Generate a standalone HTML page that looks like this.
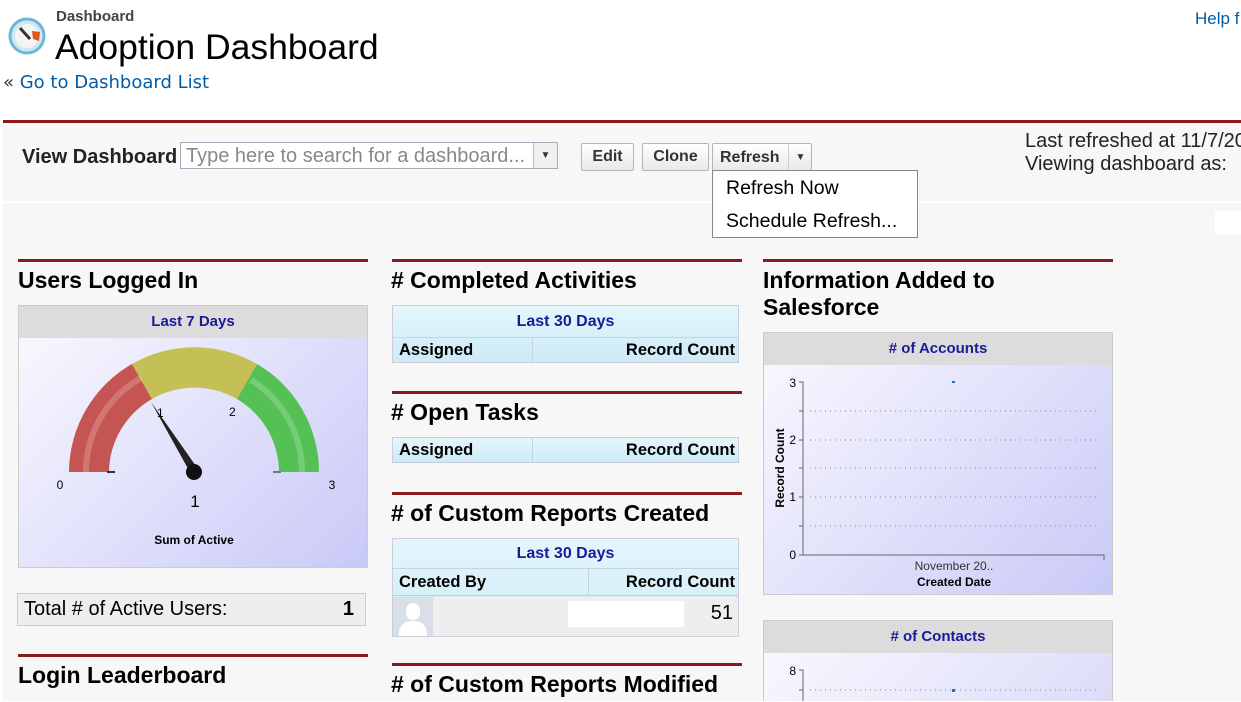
<!DOCTYPE html>
<html><head><meta charset="utf-8"><style>
*{margin:0;padding:0;box-sizing:border-box}
body{width:1241px;height:701px;overflow:hidden;background:#fff;font-family:"Liberation Sans",Arial,sans-serif;position:relative;color:#000}
.a{position:absolute;white-space:nowrap}
.red{position:absolute;height:3px;background:#8b1a1a}
.t{position:absolute;font-weight:bold;font-size:23px;white-space:nowrap}
.tbl{position:absolute;border:1px solid #ccd;background:linear-gradient(#e4f6fc,#cdebf6)}
.tbl .h{text-align:center;color:#1a1a9a;font-weight:bold;font-size:16px;border-bottom:1px solid #c5d5dd}
.tbl .r{display:flex;font-weight:bold;font-size:16.5px}
.btn{position:absolute;border:1px solid #b5b5b5;background:linear-gradient(#fff,#e9e9e9);font-weight:bold;font-size:16px;color:#333;text-align:center;border-radius:2px}
</style></head><body>
<svg class="a" style="left:8px;top:17px" width="40" height="38" viewBox="0 0 40 38"><circle cx="19" cy="19" r="17" fill="#cfe8f2" stroke="#6fb7d6" stroke-width="3"/><circle cx="19" cy="19" r="12" fill="#f4f4f4"/><line x1="12" y1="11" x2="22" y2="22" stroke="#333" stroke-width="3"/><path d="M24 14 L32 15 L31 24 L25 22Z" fill="#e2561d"/></svg>
<div class="a" style="left:56px;top:8px;font-size:15px;font-weight:bold;color:#444">Dashboard</div>
<div class="a" style="left:55px;top:27px;font-size:35.5px">Adoption Dashboard</div>
<div class="a" style="left:3px;top:72px;color:#015ba7;font-family:'DejaVu Sans',sans-serif;font-size:18px"><span style="color:#333">«</span> Go to Dashboard List</div>
<div class="a" style="left:1195px;top:9px;font-size:17px;color:#015ba7">Help f</div>
<div style="position:absolute;left:3px;top:123px;width:1238px;height:578px;background:#f7f7f7"></div>
<div style="position:absolute;left:3px;top:201px;width:1238px;height:2px;background:#fff"></div>
<div class="red" style="left:3px;top:120px;width:1238px"></div>
<div class="a" style="left:22px;top:146px;font-size:20px;font-weight:bold;color:#222">View Dashboard</div>
<div class="a" style="left:180px;top:142px;width:378px;height:27px;border:1px solid #aab;background:#fff;overflow:hidden"><span style="position:absolute;left:5px;top:2px;font-size:20px;color:#888">Type here to search for a dashboard...</span><span style="position:absolute;right:0;top:0;width:24px;height:25px;border-left:1px solid #bbb;background:#f0f0f0;font-size:10px;text-align:center;line-height:25px;color:#333">▼</span></div>
<div class="btn" style="left:581px;top:143px;width:53px;height:28px;line-height:26px">Edit</div>
<div class="btn" style="left:642px;top:143px;width:67px;height:28px;line-height:26px">Clone</div>
<div class="btn" style="left:712px;top:143px;width:100px;height:28px;line-height:28px;text-align:left;padding-left:7px">Refresh<span style="position:absolute;left:75px;top:0;width:24px;height:26px;border-left:1px solid #ccc;font-size:10px;text-align:center">▼</span></div>
<div class="a" style="left:712px;top:170px;width:206px;height:68px;border:1px solid #888;background:#fff;font-size:19.5px"><div style="position:absolute;left:13px;top:6px">Refresh Now</div><div style="position:absolute;left:13px;top:39px">Schedule Refresh...</div></div>
<div class="a" style="left:1025px;top:130px;font-size:20px;line-height:23px;color:#222">Last refreshed at 11/7/20<br>Viewing dashboard as:</div>
<div class="a" style="left:1215px;top:211px;width:26px;height:24px;background:#fff"></div>

<!-- left col -->
<div class="red" style="left:18px;top:259px;width:350px"></div>
<div class="t" style="left:18px;top:267px">Users Logged In</div>
<div class="a" style="left:18px;top:305px;width:350px;height:263px;border:1px solid #ccc;background:linear-gradient(135deg,#fafaff,#c9c9f7)">
<div style="height:32px;background:#dcdcdc;text-align:center;line-height:32px;color:#1a1a9a;font-weight:bold;font-size:15px">Last 7 Days</div>
<svg style="position:absolute;left:0;top:0" width="348" height="261" viewBox="18 306 348 261">
<path d="M68 472 A125 125 0 0 1 131 364 L151 399 A85 85 0 0 0 108 472Z" fill="#c55552"/>
<path d="M131 364 A125 125 0 0 1 256 364 L236 399 A85 85 0 0 0 151 399Z" fill="#c5c055"/>
<path d="M256 364 A125 125 0 0 1 318 472 L278 472 A85 85 0 0 0 236 399Z" fill="#55c155"/>
<path d="M85 472 A108 108 0 0 1 140 378" stroke="#fff" stroke-opacity=".2" stroke-width="6" fill="none"/>
<path d="M250 380 A108 108 0 0 1 301 472" stroke="#fff" stroke-opacity=".2" stroke-width="6" fill="none"/>
<line x1="106" y1="472" x2="114" y2="472" stroke="#333" stroke-width="2"/><line x1="272" y1="472" x2="280" y2="472" stroke="#777" stroke-width="2"/>
<path d="M150 402 L197 469 L190 474Z" fill="#222"/><circle cx="193" cy="472" r="8" fill="#111"/>
<text x="59" y="489" font-size="12" text-anchor="middle" font-family="Liberation Sans">0</text>
<text x="331" y="489" font-size="12" text-anchor="middle" font-family="Liberation Sans">3</text>
<text x="156" y="417" font-size="12" font-family="Liberation Sans">1</text>
<text x="228" y="416" font-size="12" font-family="Liberation Sans">2</text>
<text x="194" y="507" font-size="17" text-anchor="middle" font-family="Liberation Sans">1</text>
<text x="193" y="544" font-size="12" font-weight="bold" text-anchor="middle" font-family="Liberation Sans">Sum of Active</text>
</svg></div>
<div class="a" style="left:17px;top:593px;width:349px;height:33px;border:1px solid #ccc;background:#eee;font-size:20px;line-height:31px;padding:0 10px 0 6px">Total # of Active Users:<span style="position:absolute;right:11px;font-weight:bold">1</span></div>
<div class="red" style="left:18px;top:654px;width:350px"></div>
<div class="t" style="left:18px;top:662px">Login Leaderboard</div>

<!-- middle -->
<div class="red" style="left:392px;top:259px;width:350px"></div>
<div class="t" style="left:391px;top:267px"># Completed Activities</div>
<div class="tbl" style="left:392px;top:305px;width:347px;height:58px"><div class="h" style="height:32px;line-height:32px">Last 30 Days</div><div class="r" style="height:24px;line-height:24px"><div style="width:140px;padding-left:6px;border-right:1px solid #c5d5dd">Assigned</div><div style="flex:1;text-align:right;padding-right:3px">Record Count</div></div></div>
<div class="red" style="left:392px;top:391px;width:350px"></div>
<div class="t" style="left:391px;top:399px"># Open Tasks</div>
<div class="tbl" style="left:392px;top:437px;width:347px;height:26px"><div class="r" style="height:24px;line-height:24px"><div style="width:140px;padding-left:6px;border-right:1px solid #c5d5dd">Assigned</div><div style="flex:1;text-align:right;padding-right:3px">Record Count</div></div></div>
<div class="red" style="left:392px;top:492px;width:350px"></div>
<div class="t" style="left:391px;top:500px"># of Custom Reports Created</div>
<div class="tbl" style="left:392px;top:538px;width:347px;height:99px"><div class="h" style="height:30px;line-height:30px">Last 30 Days</div><div class="r" style="height:27px;line-height:27px;border-bottom:1px solid #ccc"><div style="width:196px;padding-left:6px;border-right:1px solid #c5d5dd">Created By</div><div style="flex:1;text-align:right;padding-right:3px">Record Count</div></div>
<div style="position:absolute;left:0;top:58px;width:345px;height:39px;background:#eee"><div style="position:absolute;left:0;top:0;width:40px;height:39px;background:#d8dfe6"><div style="position:absolute;left:13px;top:6px;width:14px;height:17px;border-radius:7px;background:#fff"></div><div style="position:absolute;left:6px;top:24px;width:28px;height:15px;border-radius:12px 12px 0 0;background:#fff"></div></div><div style="position:absolute;left:175px;top:4px;width:116px;height:26px;background:#fff"></div><div style="position:absolute;right:5px;top:5px;font-size:20px">51</div></div></div>
<div class="red" style="left:392px;top:663px;width:350px"></div>
<div class="t" style="left:391px;top:671px"># of Custom Reports Modified</div>

<!-- right -->
<div class="red" style="left:763px;top:259px;width:350px"></div>
<div class="t" style="left:763px;top:267px;line-height:27px">Information Added to<br>Salesforce</div>
<div class="a" style="left:763px;top:332px;width:350px;height:263px;border:1px solid #ccc;background:linear-gradient(135deg,#fafaff,#c9c9f7)">
<div style="height:32px;background:#dcdcdc;text-align:center;line-height:32px;color:#1a1a9a;font-weight:bold;font-size:15px"># of Accounts</div>
<svg style="position:absolute;left:0;top:0" width="348" height="261" viewBox="764 333 348 261" font-family="Liberation Sans">
<g stroke="#888" stroke-dasharray="1 4"><line x1="810" y1="411" x2="1100" y2="411"/><line x1="810" y1="440" x2="1100" y2="440"/><line x1="810" y1="468" x2="1100" y2="468"/><line x1="810" y1="497" x2="1100" y2="497"/><line x1="810" y1="526" x2="1100" y2="526"/></g>
<path d="M799 382 H803 V555 H1104 V560 M799 555 H803 M799 440 H803 M799 497 H803 M799 411H803M799 468H803M799 526H803" stroke="#666" fill="none"/>
<rect x="952" y="381" width="3" height="2" fill="#1a6fd6"/>
<g font-size="12" text-anchor="end"><text x="796" y="387">3</text><text x="796" y="444">2</text><text x="796" y="501">1</text><text x="796" y="559">0</text></g>
<text x="954" y="570" font-size="12" text-anchor="middle" fill="#333">November 20..</text>
<text x="954" y="586" font-size="12" font-weight="bold" text-anchor="middle">Created Date</text>
<text x="0" y="0" font-size="12" font-weight="bold" text-anchor="middle" transform="translate(784,468) rotate(-90)">Record Count</text>
</svg></div>
<div class="a" style="left:763px;top:620px;width:350px;height:81px;border:1px solid #ccc;border-bottom:none;background:linear-gradient(135deg,#fafaff,#dcdcf9)">
<div style="height:32px;background:#dcdcdc;text-align:center;line-height:32px;color:#1a1a9a;font-weight:bold;font-size:15px"># of Contacts</div>
<svg style="position:absolute;left:0;top:0" width="348" height="81" viewBox="764 621 348 81" font-family="Liberation Sans">
<line x1="810" y1="690" x2="1100" y2="690" stroke="#888" stroke-dasharray="1 4"/>
<path d="M799 670 H803 V701 M799 690H803" stroke="#666" fill="none"/>
<rect x="952" y="689" width="3" height="3" fill="#1a6fd6"/>
<text x="796" y="675" font-size="12" text-anchor="end">8</text></svg></div>
</body></html>
